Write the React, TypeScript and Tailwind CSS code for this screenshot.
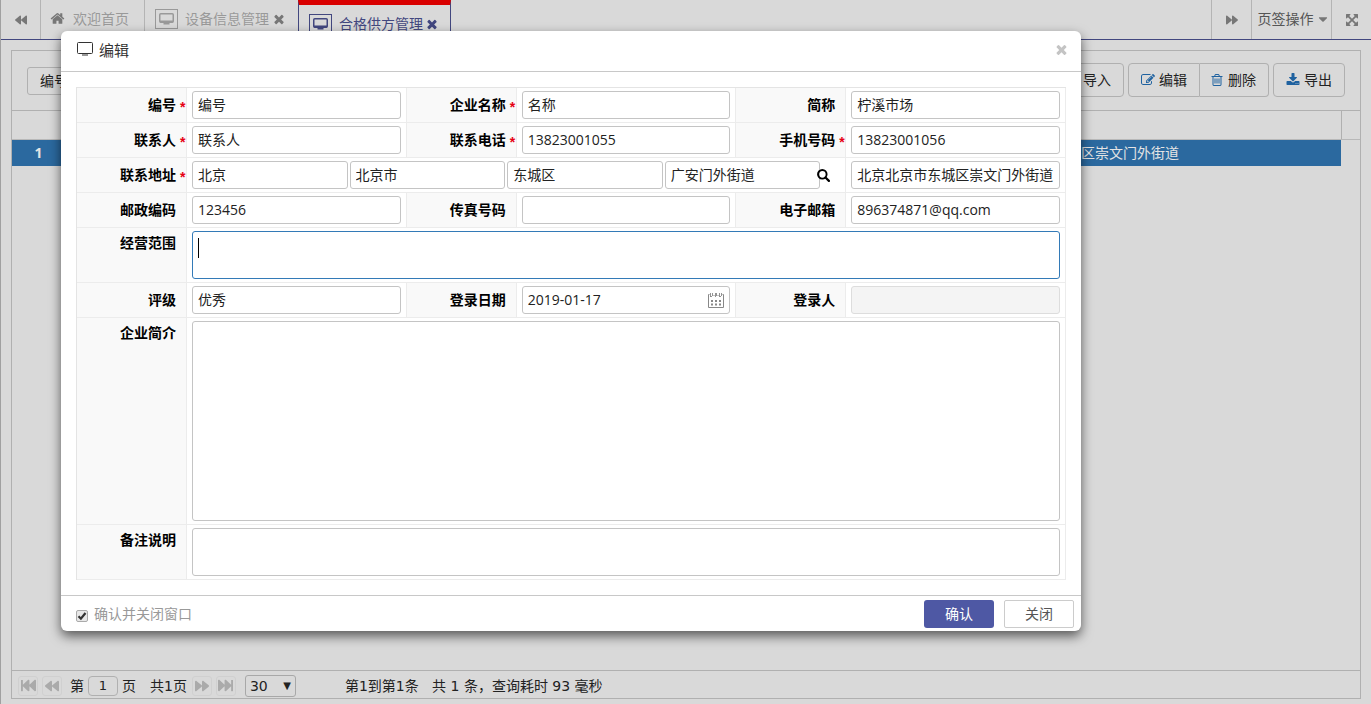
import type { ReactNode } from "react";
import { FaBackward, FaCaretDown, FaFastBackward, FaFastForward, FaForward, FaUpload } from "react-icons/fa";

const glyphs = {
  times:
    "M1490 1322q0 40-28 68l-136 136q-28 28-68 28t-68-28l-294-294-294 294q-28 28-68 28t-68-28l-136-136q-28-28-28-68t28-68l294-294-294-294q-28-28-28-68t28-68l136-136q28-28 68-28t68 28l294 294 294-294q28-28 68-28t68 28l136 136q28 28 28 68t-28 68l-294 294 294 294q28 28 28 68z",
  home: "M1472 992v480q0 26-19 45t-45 19h-384v-384h-256v384h-384q-26 0-45-19t-19-45v-480q0-1 .5-3t.5-3l575-474 575 474q1 2 1 6zm223-69l-62 74q-8 9-21 11h-3q-13 0-21-7l-692-577-692 577q-12 8-24 7-13-2-21-11l-62-74q-8-10-7-23.5t11-21.5l719-599q32-26 76-26t76 26l244 204v-195q0-14 9-23t23-9h192q14 0 23 9t9 23v408l219 182q10 8 11 21.5t-7 23.5z",
  expand:
    "M1411 541l-355 355 355 355 144-144q29-31 70-14 39 17 39 59v448q0 26-19 45t-45 19h-448q-42 0-59-40-17-39 14-69l144-144-355-355-355 355 144 144q31 30 14 69-17 40-59 40h-448q-26 0-45-19t-19-45v-448q0-42 40-59 39-17 69 14l144 144 355-355-355-355-144 144q-19 19-45 19-12 0-24-5-40-17-40-59v-448q0-26 19-45t45-19h448q42 0 59 40 17 39-14 69l-144 144 355 355 355-355-144-144q-31-30-14-69 17-40 59-40h448q26 0 45 19t19 45v448q0 42-39 59-13 5-25 5-26 0-45-19z",
  edit: "M888 1184l116-116-152-152-116 116v56h96v96h56zm440-720q-16-16-33 1l-350 350q-17 17-1 33t33-1l350-350q17-17 1-33zm80 594v190q0 119-84.5 203.5t-203.5 84.5h-832q-119 0-203.5-84.5t-84.5-203.5v-832q0-119 84.5-203.5t203.5-84.5h832q63 0 117 25 15 7 18 23 3 17-9 29l-49 49q-14 14-32 8-23-6-45-6h-832q-66 0-113 47t-47 113v832q0 66 47 113t113 47h832q66 0 113-47t47-113v-126q0-13 9-22l64-64q15-15 35-7t20 29zm-96-738l288 288-672 672h-288v-288zm444 132l-92 92-288-288 92-92q28-28 68-28t68 28l152 152q28 28 28 68t-28 68z",
  trash:
    "M704 736v576q0 14-9 23t-23 9h-64q-14 0-23-9t-9-23v-576q0-14 9-23t23-9h64q14 0 23 9t9 23zm256 0v576q0 14-9 23t-23 9h-64q-14 0-23-9t-9-23v-576q0-14 9-23t23-9h64q14 0 23 9t9 23zm256 0v576q0 14-9 23t-23 9h-64q-14 0-23-9t-9-23v-576q0-14 9-23t23-9h64q14 0 23 9t9 23zm128 724v-948h-896v948q0 22 7 40.5t14.5 27 10.5 8.5h832q3 0 10.5-8.5t14.5-27 7-40.5zm-672-1076h448l-48-117q-7-9-17-11h-317q-10 2-17 11zm928 32v64q0 14-9 23t-23 9h-96v948q0 83-47 143.5t-113 60.5h-832q-66 0-113-58.5t-47-141.5v-952h-96q-14 0-23-9t-9-23v-64q0-14 9-23t23-9h309l70-167q15-37 54-63t79-26h320q40 0 79 26t54 63l70 167h309q14 0 23 9t9 23z",
  download:
    "M1344 1344q0-26-19-45t-45-19-45 19-19 45 19 45 45 19 45-19 19-45zm256 0q0-26-19-45t-45-19-45 19-19 45 19 45 45 19 45-19 19-45zm128-224v320q0 40-28 68t-68 28h-1472q-40 0-68-28t-28-68v-320q0-40 28-68t68-28h465l135 136q58 56 136 56t136-56l136-136h464q40 0 68 28t28 68zm-325-569q17 41-14 70l-448 448q-18 19-45 19t-45-19l-448-448q-31-29-14-70 17-39 59-39h256v-448q0-26 19-45t45-19h256q26 0 45 19t19 45v448h256q42 0 59 39z",
};

function Glyph({
  name,
  size = 14,
  className,
}: {
  name: keyof typeof glyphs;
  size?: number;
  className?: string;
}) {
  return (
    <svg width={size} height={size} viewBox="0 0 1792 1792" fill="currentColor" className={className} aria-hidden>
      <path d={glyphs[name]} />
    </svg>
  );
}

function BoxedMonitorIcon() {
  return (
    <svg width="23" height="20" viewBox="0 0 23 20" fill="none" stroke="currentColor" aria-hidden>
      <rect x="0.5" y="0.5" width="22" height="19" />
      <rect x="4.75" y="4.75" width="13.5" height="8.5" rx="1" strokeWidth="1.5" />
      <path d="M5 11.500h13v2h-3.500v2h-6v-2H5z" fill="currentColor" stroke="none" />
    </svg>
  );
}

function MonitorIcon() {
  return (
    <svg width="16" height="14" viewBox="0 0 16 14" fill="none" stroke="currentColor" aria-hidden>
      <rect x="0.5" y="0.5" width="15" height="11" rx="1" />
      <path d="M5 13h6" />
    </svg>
  );
}

function SearchIcon() {
  return (
    <svg width="13" height="13" viewBox="0 0 13 13" fill="none" stroke="currentColor" aria-hidden>
      <circle cx="5.300" cy="5.300" r="4.300" strokeWidth="1.900" />
      <path d="M8.500 8.500l3.400 3.400" strokeWidth="2.200" strokeLinecap="round" />
    </svg>
  );
}

function CalendarIcon() {
  return (
    <svg width="16" height="16" viewBox="0 0 16 16" fill="none" stroke="currentColor" aria-hidden>
      <path d="M1.500 2.500H.5v13h15v-13h-1M5.500 3.500h1M9.500 3.500h1" />
      <path d="M2.500 1v4M4.500 1v3M7.500 1v4M8.500 1v3M11.500 1v4M13.500 1v3M2 4.500h2M11 4.500h2" strokeWidth="0.900" />
      <path d="M3 9h2M7 9h2M11 9h2M3 12.500h2M7 12.500h2M11 12.500h2" strokeWidth="1.800" />
    </svg>
  );
}

const inputClass =
  "block h-7 w-full min-w-0 rounded-[3px] border border-[#c4c4c4] bg-white px-[5px] pb-[2px] text-sm text-[#222] outline-none disabled:border-[#ddd] disabled:bg-[#f4f4f4]";

const textareaClass =
  "block w-full resize-none rounded-[3px] border border-[#c4c4c4] bg-white px-[5px] py-1 text-sm outline-none";

function FieldLabel({
  htmlFor,
  required,
  top,
  children,
}: {
  htmlFor: string;
  required?: boolean;
  top?: boolean;
  children: ReactNode;
}) {
  return (
    <div
      className={`flex justify-end border-r border-b border-[#ececec] bg-[#f9f9f9] pr-[10px] text-sm leading-5 font-bold text-black ${
        top ? "items-start pt-[5px]" : "items-center"
      }`}
    >
      <label htmlFor={htmlFor} className="relative">
        {children}
        {required && (
          <span className="absolute top-[2px] left-full pl-1 font-['Liberation_Sans',sans-serif] text-[#e60012]">*</span>
        )}
      </label>
    </div>
  );
}

function Cell({ className = "", children }: { className?: string; children: ReactNode }) {
  return (
    <div className={`relative border-r border-b border-[#ececec] px-[5px] py-[3px] ${className}`}>
      {children}
    </div>
  );
}

function TextField({
  id,
  label,
  value = "",
  required,
  disabled,
}: {
  id: string;
  label: string;
  value?: string;
  required?: boolean;
  disabled?: boolean;
}) {
  return (
    <>
      <FieldLabel htmlFor={id} required={required}>
        {label}
      </FieldLabel>
      <Cell>
        <input id={id} defaultValue={value} disabled={disabled} className={inputClass} />
      </Cell>
    </>
  );
}

const regions = [
  { label: "省份", value: "北京" },
  { label: "城市", value: "北京市" },
  { label: "区县", value: "东城区" },
  { label: "街道", value: "广安门外街道" },
];

function SupplierForm() {
  return (
    <form className="grid grid-cols-[110px_1fr_110px_1fr_110px_1fr] border-t border-l border-[#e4e4e4]">
      <TextField id="code" label="编号" value="编号" required />
      <TextField id="company" label="企业名称" value="名称" required />
      <TextField id="short" label="简称" value="柠溪市场" />

      <TextField id="contact" label="联系人" value="联系人" required />
      <TextField id="phone" label="联系电话" value="13823001055" required />
      <TextField id="mobile" label="手机号码" value="13823001056" required />

      <FieldLabel htmlFor="region-0" required>
        联系地址
      </FieldLabel>
      <Cell className="col-span-4 flex gap-[2px] pr-[25px]">
        {regions.map((region, i) => (
          <input
            key={region.label}
            id={`region-${i}`}
            aria-label={region.label}
            defaultValue={region.value}
            className={inputClass}
          />
        ))}
        <button type="button" aria-label="搜索" className="absolute top-[11px] right-[15px] text-black">
          <SearchIcon />
        </button>
      </Cell>
      <Cell>
        <input aria-label="详细地址" defaultValue="北京北京市东城区崇文门外街道" className={inputClass} />
      </Cell>

      <TextField id="zip" label="邮政编码" value="123456" />
      <TextField id="fax" label="传真号码" />
      <TextField id="email" label="电子邮箱" value="896374871@qq.com" />

      <FieldLabel htmlFor="scope" top>
        经营范围
      </FieldLabel>
      <Cell className="col-span-5">
        <textarea id="scope" className={`${textareaClass} h-12 border-[#337ab7]! caret-transparent`} />
        <span className="absolute top-[10px] left-[11px] h-5 w-px bg-black" />
      </Cell>

      <TextField id="grade" label="评级" value="优秀" />
      <FieldLabel htmlFor="date">登录日期</FieldLabel>
      <Cell>
        <input id="date" defaultValue="2019-01-17" className={inputClass} />
        <button type="button" aria-label="选择日期" className="absolute top-[9px] right-[11px] text-[#888]">
          <CalendarIcon />
        </button>
      </Cell>
      <TextField id="user" label="登录人" disabled />

      <FieldLabel htmlFor="profile" top>
        企业简介
      </FieldLabel>
      <Cell className="col-span-5">
        <textarea id="profile" className={`${textareaClass} h-[200px]`} />
      </Cell>

      <FieldLabel htmlFor="remark" top>
        备注说明
      </FieldLabel>
      <Cell className="col-span-5">
        <textarea id="remark" className={`${textareaClass} h-12`} />
      </Cell>
    </form>
  );
}

function EditDialog() {
  return (
    <div className="absolute inset-0 pt-[31px] pl-[60px]">
      <div
        role="dialog"
        aria-label="编辑"
        className="w-full max-w-[1020px] rounded-md bg-white shadow-[0_5px_12px_rgba(0,0,0,0.6)]"
      >
        <div className="flex h-[41px] items-center border-b border-[#c8c8c8] pr-3 pb-1 pl-4 text-[#333]">
          <MonitorIcon />
          <h2 className="ml-[6px] pt-[2px] text-[15px] leading-5">编辑</h2>
          <button type="button" aria-label="关闭窗口" className="ml-auto text-[#c4c4c4]">
            <Glyph name="times" size={15} />
          </button>
        </div>
        <div className="p-[15px]">
          <SupplierForm />
        </div>
        <div className="flex h-9 items-center gap-[10px] border-t border-[#c8c8c8] pr-[7px] pl-[15px] text-sm">
          <label className="mr-auto flex items-center gap-[6px] text-[#999]">
            <span className="relative mt-1 flex">
              <input
                type="checkbox"
                defaultChecked
                className="peer size-3 appearance-none rounded-[2px] border border-[#aaa] bg-[#e8e8e8]"
              />
              <svg
                viewBox="0 0 12 12"
                className="pointer-events-none absolute inset-0 hidden size-3 peer-checked:block"
                fill="none"
                stroke="#333"
                strokeWidth="2.200"
                aria-hidden
              >
                <path d="M2.500 6.200l2.400 2.500L9.500 3" />
              </svg>
            </span>
            确认并关闭窗口
          </label>
          <button type="button" className="h-7 w-[70px] rounded-[3px] bg-[#4e58a4] text-white">
            确认
          </button>
          <button type="button" className="h-7 w-[70px] rounded-[2px] border border-[#ccc] bg-white text-[#555]">
            关闭
          </button>
        </div>
      </div>
    </div>
  );
}

function TabBar() {
  return (
    <nav className="flex h-10 border-b border-[#42477f] text-sm text-[#999]">
      <button type="button" aria-label="向左滚动" className="flex w-10 items-center justify-center border-r border-[#b4b4b4] text-[#777]">
        <FaBackward size={12} />
      </button>
      <a href="#home" className="flex items-center gap-2 border-r border-[#b4b4b4] pr-[15px] pb-[2px] pl-[9px]">
        <Glyph name="home" size={15} className="text-[#777]" />
        欢迎首页
      </a>
      <div className="flex items-center gap-[3px] pr-3 pb-[2px] pl-[10px]">
        <a href="#device" className="flex items-center gap-[7px]">
          <BoxedMonitorIcon />
          设备信息管理
        </a>
        <button type="button" aria-label="关闭设备信息管理" className="text-[#777]">
          <Glyph name="times" />
        </button>
      </div>
      <div className="flex items-center gap-[2px] border-x border-t-[5px] border-x-[#42477f] border-t-[#d90000] pt-[3px] pr-[11px] pl-[10px] text-[#42477f]">
        <a href="#supplier" className="flex items-center gap-[7px]">
          <BoxedMonitorIcon />
          合格供方管理
        </a>
        <button type="button" aria-label="关闭合格供方管理">
          <Glyph name="times" />
        </button>
      </div>
      <div className="ml-auto flex text-[#777]">
        <button type="button" aria-label="向右滚动" className="flex w-10 items-center justify-center border-l border-[#b4b4b4]">
          <FaForward size={12} />
        </button>
        <button type="button" className="flex w-20 items-center justify-center gap-[2px] border-l border-[#b4b4b4] pb-[2px] pl-1 text-[#555]">
          页签操作
          <FaCaretDown size={14} className="text-[#777]" />
        </button>
        <button type="button" aria-label="全屏" className="flex w-10 items-center justify-center border-l border-[#b4b4b4]">
          <Glyph name="expand" />
        </button>
      </div>
    </nav>
  );
}

const toolClass = "flex h-[34px] items-center gap-1 border border-[#b0b0b0] px-3";

function Toolbar() {
  return (
    <div className="flex h-[60px] items-center gap-1 border-b border-[#b0b0b0] px-[15px] pb-[2px] text-sm text-[#222]">
      <button type="button" className="mt-[2px] mr-auto h-7 rounded-[3px] border border-[#b0b0b0] px-3">
        编号
      </button>
      <button type="button" className={`${toolClass} rounded-[4px]`}>
        <FaUpload size={14} className="text-[#1f62a0]" />
        导入
      </button>
      <div className="flex">
        <button type="button" className={`${toolClass} rounded-l-[4px]`}>
          <Glyph name="edit" className="text-[#1f62a0]" />
          编辑
        </button>
        <button type="button" className={`${toolClass} rounded-r-[4px] border-l-0 pl-[10px]`}>
          <Glyph name="trash" className="text-[#1f62a0]" />
          删除
        </button>
      </div>
      <button type="button" className={`${toolClass} rounded-[4px]`}>
        <Glyph name="download" className="text-[#1f62a0]" />
        导出
      </button>
    </div>
  );
}

function Grid() {
  return (
    <div className="flex-1">
      <div className="flex h-[29px] border-b border-[#b8b8b8]">
        <div className="mr-[18px] flex-1 border-r border-[#b0b0b0]" />
      </div>
      <div className="pr-[19px]">
        <table className="w-full table-fixed text-sm text-[#e4e4e4]">
          <tbody>
            <tr className="h-[26px] bg-[#2b699f]">
              <td className="w-[53px] text-center font-bold">1</td>
              <td />
              <td className="w-[363px] pl-[5px]">北京北京市东城区崇文门外街道</td>
            </tr>
          </tbody>
        </table>
      </div>
    </div>
  );
}

function PagerButton({ label, children }: { label: string; children: ReactNode }) {
  return (
    <button
      type="button"
      aria-label={label}
      className="flex size-5 items-center justify-center rounded-[3px] border border-[#d0d0d0] text-[#aaa]"
    >
      {children}
    </button>
  );
}

function Pager() {
  return (
    <div className="flex h-7 items-center gap-1 border-t border-[#b0b0b0] pt-[2px] pl-[6px] font-['DejaVu_Sans','Noto_Sans_CJK_SC',sans-serif] text-sm leading-5 text-[#222]">
      <PagerButton label="首页">
        <FaFastBackward size={15} />
      </PagerButton>
      <PagerButton label="上一页">
        <FaBackward size={14} />
      </PagerButton>
      <label htmlFor="page" className="ml-1">
        第
      </label>
      <input
        id="page"
        defaultValue="1"
        className="h-5 w-[30px] rounded-[4px] border border-[#b0b0b0] text-center text-[13px]"
      />
      <span>页</span>
      <span className="ml-[10px]">共1页</span>
      <span className="ml-px flex gap-1">
        <PagerButton label="下一页">
          <FaForward size={14} />
        </PagerButton>
        <PagerButton label="末页">
          <FaFastForward size={15} />
        </PagerButton>
      </span>
      <span className="relative ml-[5px]">
        <select
          aria-label="每页条数"
          defaultValue="30"
          className="block h-[22px] w-[51px] appearance-none rounded-[3px] border border-[#a8a8a8] pl-1 leading-5"
        >
          <option>30</option>
          <option>50</option>
          <option>100</option>
        </select>
        <span className="pointer-events-none absolute top-px right-[5px] text-[10px]">▼</span>
      </span>
      <span className="ml-[45px] whitespace-pre">第1到第1条   共 1 条，查询耗时 93 毫秒</span>
    </div>
  );
}

export default function App() {
  return (
    <div className="relative flex h-screen flex-col overflow-hidden border-l border-[#a0a0a0] bg-[#d9d9d9] font-['Open_Sans','Noto_Sans_CJK_SC',sans-serif]">
      <TabBar />
      <main className="mx-[10px] mt-[10px] mb-[5px] flex flex-1 flex-col border border-[#b0b0b0]">
        <Toolbar />
        <Grid />
        <Pager />
      </main>
      <EditDialog />
    </div>
  );
}
